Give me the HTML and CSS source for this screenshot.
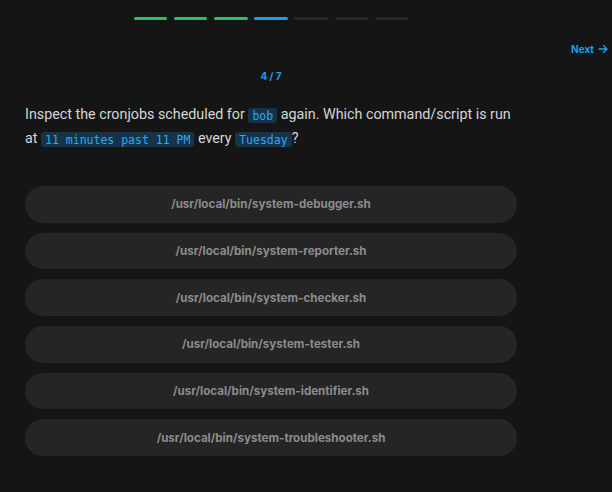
FILE: index.html
```html
<!DOCTYPE html>
<html>
<head>
<meta charset="utf-8">
<link rel="stylesheet" href="styles.css">
</head>
<body>
<div class="page">
  <div class="progress">
    <span class="seg done"></span>
    <span class="seg done"></span>
    <span class="seg done"></span>
    <span class="seg current"></span>
    <span class="seg"></span>
    <span class="seg"></span>
    <span class="seg"></span>
  </div>
  <div class="nav">
    <a class="next">Next
      <svg width="10" height="10" viewBox="0 0 10 10" fill="none" stroke="currentColor" stroke-width="1.4" stroke-linecap="round" stroke-linejoin="round"><path d="M1 5h8M5.5 1.5 9 5l-3.5 3.5"/></svg>
    </a>
  </div>
  <div class="main">
    <div class="counter">4 / 7</div>
    <p class="question">Inspect the cronjobs scheduled for <code>bob</code> again. Which command/script is run at <code>11 minutes past 11 PM</code> every <code>Tuesday</code>?</p>
    <ul class="options">
      <li class="option">/usr/local/bin/system-debugger.sh</li>
      <li class="option">/usr/local/bin/system-reporter.sh</li>
      <li class="option">/usr/local/bin/system-checker.sh</li>
      <li class="option">/usr/local/bin/system-tester.sh</li>
      <li class="option">/usr/local/bin/system-identifier.sh</li>
      <li class="option">/usr/local/bin/system-troubleshooter.sh</li>
    </ul>
  </div>
</div>
</body>
</html>
```
FILE: styles.css
```css
* { box-sizing: border-box; }
html, body {
  margin: 0;
  padding: 0;
  background: #151515;
  font-family: Inter, "Noto Sans", sans-serif;
}
.page {
  width: 612px;
  height: 492px;
  padding-top: 17px;
}
.progress {
  width: 492px;
  margin-left: 25px;
  display: flex;
  justify-content: center;
  gap: 6.7px;
}
.seg {
  display: block;
  width: 33.5px;
  height: 3px;
  border-radius: 2px;
  background: #272727;
}
.seg.done { background: #22c55e; }
.seg.current { background: #1a9ff0; }
.nav {
  display: flex;
  justify-content: flex-end;
  padding-right: 4px;
  margin-top: 22px;
}
.next {
  display: flex;
  align-items: center;
  gap: 4px;
  color: #1a9ff0;
  font-size: 10px;
  font-weight: 700;
  line-height: 14px;
}
.main {
  width: 492px;
  margin-left: 25px;
}
.counter {
  margin-top: 13px;
  text-align: center;
  color: #1a9ff0;
  font-size: 10px;
  font-weight: 700;
  line-height: 14px;
}
.question {
  margin: 20px 0 0;
  color: #d6d6d6;
  font-family: Roboto, "Noto Sans", sans-serif;
  font-size: 14.3px;
  line-height: 23px;
}
.question code {
  font-family: "DejaVu Sans Mono", "Liberation Mono", monospace;
  font-size: 11.5px;
  color: #2ea8f0;
  background: #15344a;
  border-radius: 3px;
  padding: 0.5px 4px;
}
.options {
  list-style: none;
  margin: 35px 0 0;
  padding: 0;
  display: flex;
  flex-direction: column;
  gap: 10px;
}
.option {
  height: 36.7px;
  border-radius: 18px;
  background: #252525;
  color: #8c8c8c;
  font-size: 11.6px;
  font-weight: 700;
  display: flex;
  align-items: center;
  justify-content: center;
}
```
